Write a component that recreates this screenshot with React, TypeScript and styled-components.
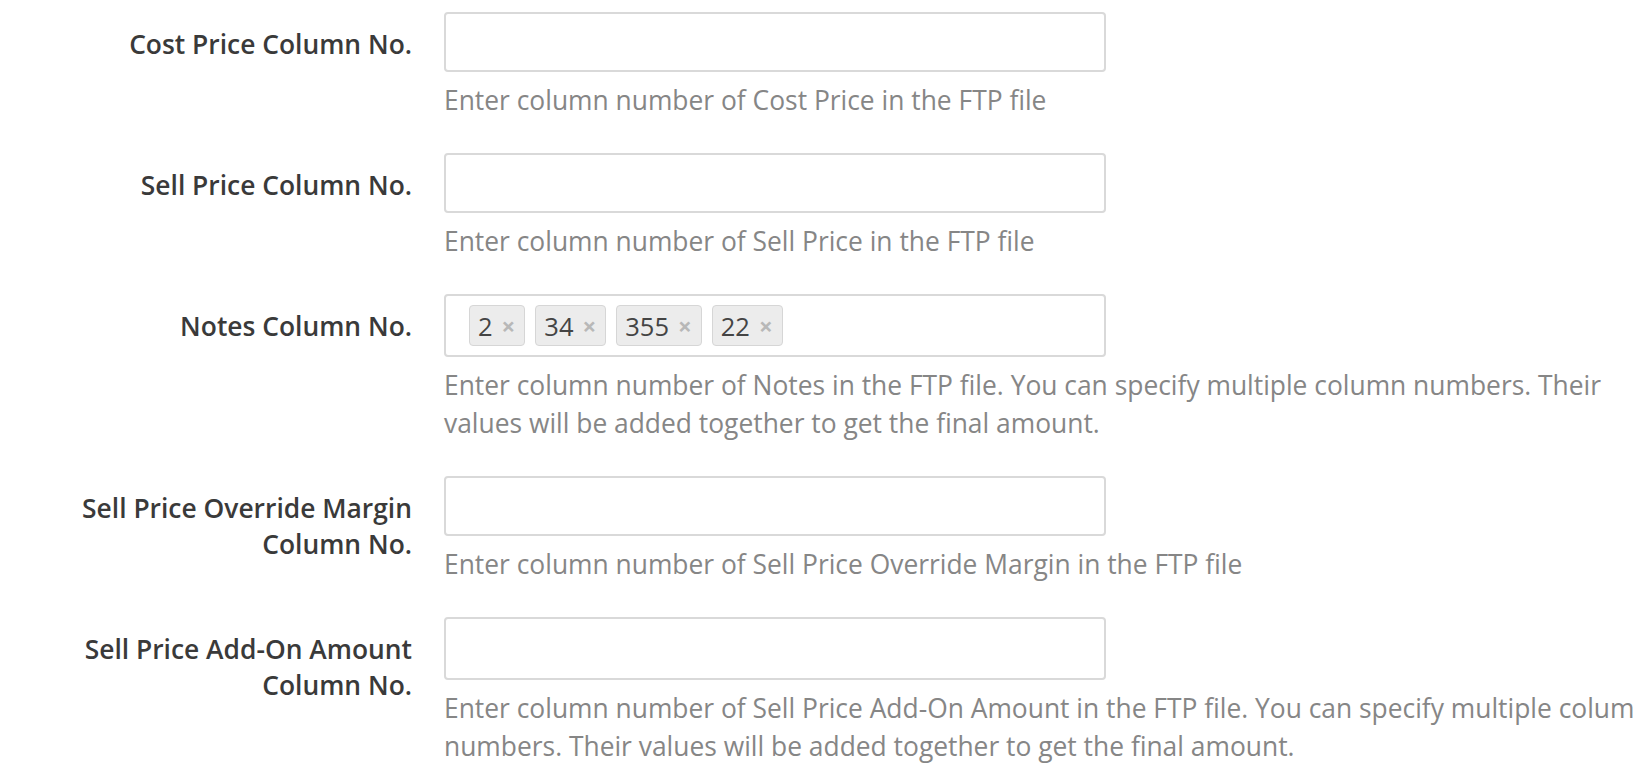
import React from "react";
import styled, { createGlobalStyle } from "styled-components";

const Global = createGlobalStyle`
  html, body {
    margin: 0;
    padding: 0;
    background: #ffffff;
    overflow: hidden;
  }
  body {
    font-family: "Open Sans", "Noto Sans", "Liberation Sans", sans-serif;
  }
`;

const Form = styled.form`
  padding-top: 12px;
  width: 1659px;
`;

const Row = styled.div`
  display: grid;
  grid-template-columns: 412px 1215px;
  column-gap: 32px;
  margin-bottom: 34px;
`;

const Label = styled.label`
  box-sizing: border-box;
  padding: 14px 0 0 40px;
  text-align: right;
  font-size: 26.4px;
  line-height: 36px;
  font-weight: 600;
  color: #3a3a3a;
`;

const Field = styled.div`
  display: flex;
  flex-direction: column;
  align-items: flex-start;
`;

const TextInput = styled.input<{ $h: number }>`
  box-sizing: border-box;
  width: 662px;
  height: ${(p) => p.$h}px;
  border: 2px solid #d9d9d9;
  border-radius: 4px;
  padding: 0 16px;
  font-family: inherit;
  font-size: 24px;
  color: #333;
  background: #fff;
  outline: none;
`;

const TagBox = styled.div`
  box-sizing: border-box;
  width: 662px;
  height: 63px;
  border: 2px solid #d9d9d9;
  border-radius: 4px;
  padding: 9px 23px;
  display: flex;
  align-items: center;
  gap: 10px;
  background: #fff;
`;

const Tag = styled.span`
  box-sizing: border-box;
  display: inline-flex;
  align-items: center;
  gap: 9px;
  height: 41px;
  padding: 0 9px 0 8px;
  border: 1.5px solid #d6d6d6;
  border-radius: 4px;
  background: #ececec;
  font-size: 25.5px;
  color: #444;
`;

const Remove = styled.span`
  font-size: 24px;
  font-weight: 700;
  color: #b8b8b8;
  line-height: 1;
`;

const Help = styled.p`
  margin: 9px 0 0;
  width: 1215px;
  font-size: 26.4px;
  line-height: 38px;
  color: #868686;
`;

type RowDef = {
  label: string;
  help: string;
  h: number;
  tags?: string[];
};

const rows: RowDef[] = [
  {
    label: "Cost Price Column No.",
    help: "Enter column number of Cost Price in the FTP file",
    h: 60,
  },
  {
    label: "Sell Price Column No.",
    help: "Enter column number of Sell Price in the FTP file",
    h: 60,
  },
  {
    label: "Notes Column No.",
    help:
      "Enter column number of Notes in the FTP file. You can specify multiple column numbers. Their values will be added together to get the final amount.",
    h: 63,
    tags: ["2", "34", "355", "22"],
  },
  {
    label: "Sell Price Override Margin Column No.",
    help: "Enter column number of Sell Price Override Margin in the FTP file",
    h: 60,
  },
  {
    label: "Sell Price Add-On Amount Column No.",
    help:
      "Enter column number of Sell Price Add-On Amount in the FTP file. You can specify multiple column numbers. Their values will be added together to get the final amount.",
    h: 63,
  },
];

export default function App() {
  return (
    <>
      <Global />
      <Form onSubmit={(e) => e.preventDefault()}>
        {rows.map((r) => (
          <Row key={r.label}>
            <Label>{r.label}</Label>
            <Field>
              {r.tags ? (
                <TagBox>
                  {r.tags.map((t) => (
                    <Tag key={t}>
                      {t}
                      <Remove>×</Remove>
                    </Tag>
                  ))}
                </TagBox>
              ) : (
                <TextInput $h={r.h} type="text" />
              )}
              <Help>{r.help}</Help>
            </Field>
          </Row>
        ))}
      </Form>
    </>
  );
}
